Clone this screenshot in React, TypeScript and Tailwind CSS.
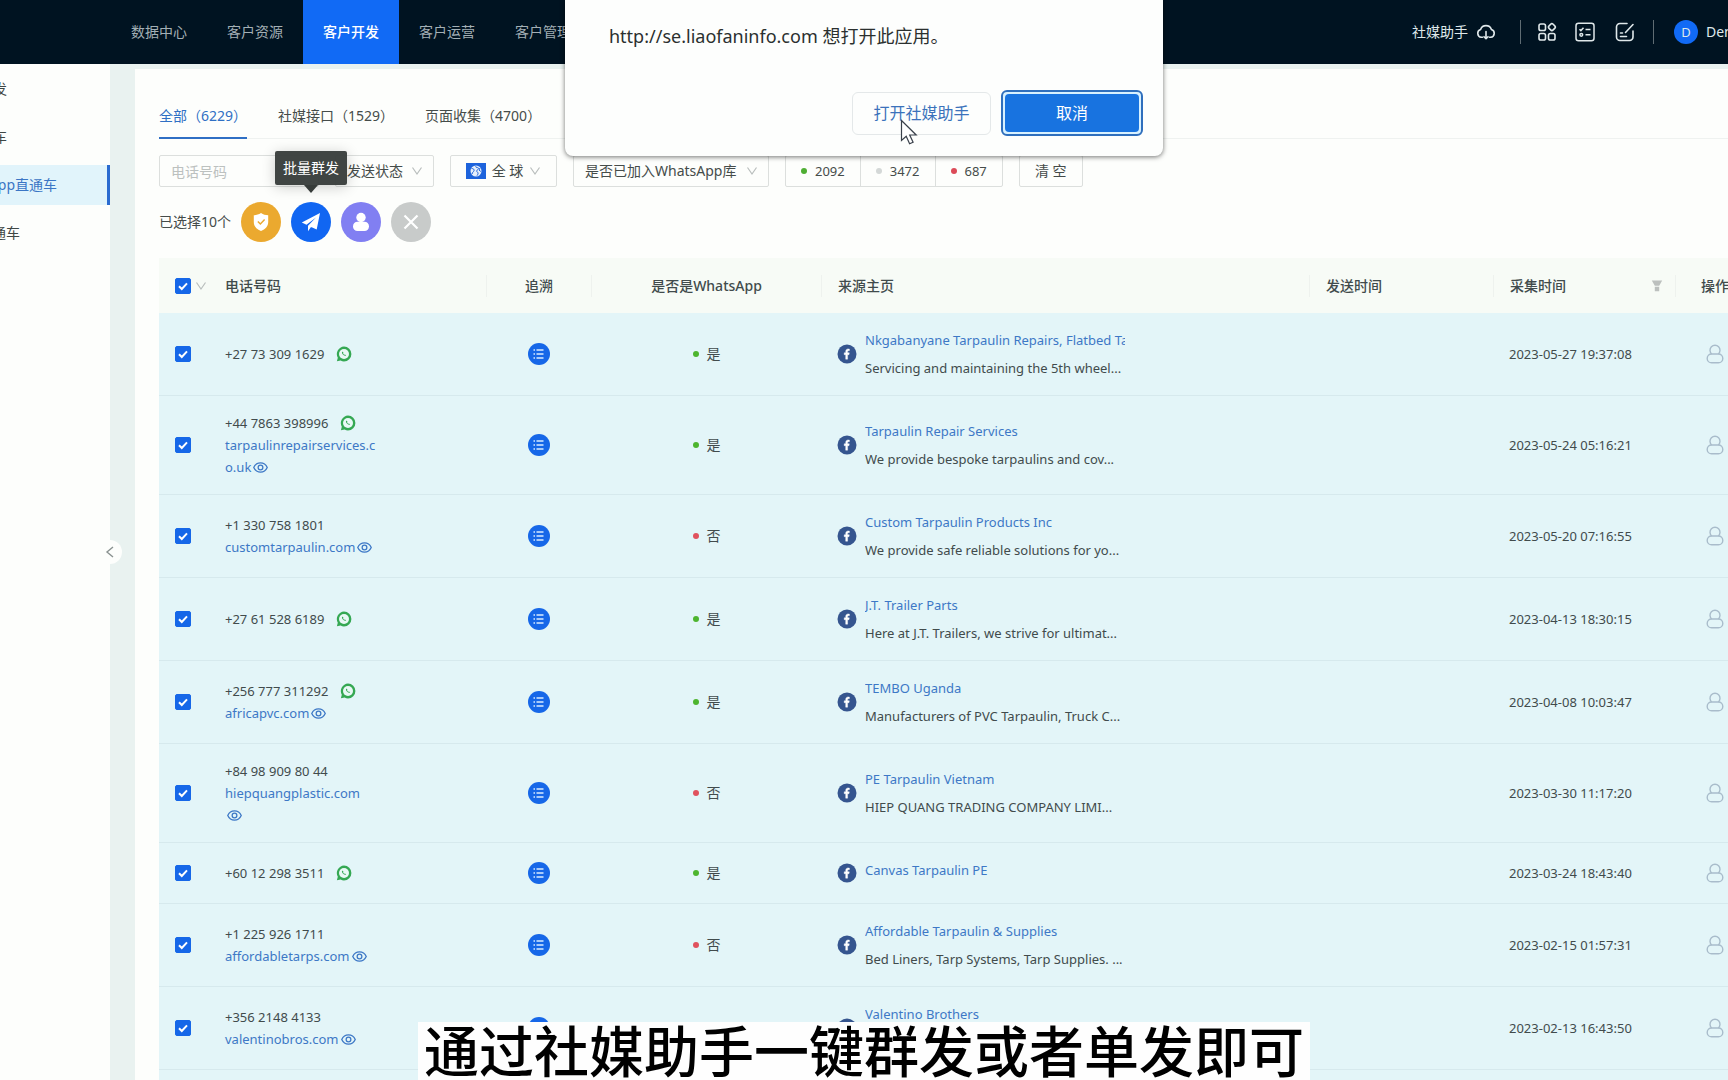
import React from "react";
import clsx from "clsx";

interface Lead {
  phone: string;
  site?: string;
  hasBadge: boolean;
  isWhatsApp: boolean;
  title: string;
  desc?: string;
  collectedAt: string;
}

const leads: Lead[] = [
  {
    phone: "+27 73 309 1629",
    hasBadge: true,
    isWhatsApp: true,
    title: "Nkgabanyane Tarpaulin Repairs, Flatbed Tarps",
    desc: "Servicing and maintaining the 5th wheel...",
    collectedAt: "2023-05-27 19:37:08",
  },
  {
    phone: "+44 7863 398996",
    site: "tarpaulinrepairservices.co.uk",
    hasBadge: true,
    isWhatsApp: true,
    title: "Tarpaulin Repair Services",
    desc: "We provide bespoke tarpaulins and cov...",
    collectedAt: "2023-05-24 05:16:21",
  },
  {
    phone: "+1 330 758 1801",
    site: "customtarpaulin.com",
    hasBadge: false,
    isWhatsApp: false,
    title: "Custom Tarpaulin Products Inc",
    desc: "We provide safe reliable solutions for yo...",
    collectedAt: "2023-05-20 07:16:55",
  },
  {
    phone: "+27 61 528 6189",
    hasBadge: true,
    isWhatsApp: true,
    title: "J.T. Trailer Parts",
    desc: "Here at J.T. Trailers, we strive for ultimat...",
    collectedAt: "2023-04-13 18:30:15",
  },
  {
    phone: "+256 777 311292",
    site: "africapvc.com",
    hasBadge: true,
    isWhatsApp: true,
    title: "TEMBO Uganda",
    desc: "Manufacturers of PVC Tarpaulin, Truck C...",
    collectedAt: "2023-04-08 10:03:47",
  },
  {
    phone: "+84 98 909 80 44",
    site: "hiepquangplastic.com",
    hasBadge: false,
    isWhatsApp: false,
    title: "PE Tarpaulin Vietnam",
    desc: "HIEP QUANG TRADING COMPANY LIMI...",
    collectedAt: "2023-03-30 11:17:20",
  },
  {
    phone: "+60 12 298 3511",
    hasBadge: true,
    isWhatsApp: true,
    title: "Canvas Tarpaulin PE",
    collectedAt: "2023-03-24 18:43:40",
  },
  {
    phone: "+1 225 926 1711",
    site: "affordabletarps.com",
    hasBadge: false,
    isWhatsApp: false,
    title: "Affordable Tarpaulin & Supplies",
    desc: "Bed Liners, Tarp Systems, Tarp Supplies. ...",
    collectedAt: "2023-02-15 01:57:31",
  },
  {
    phone: "+356 2148 4133",
    site: "valentinobros.com",
    hasBadge: false,
    isWhatsApp: false,
    title: "Valentino Brothers",
    collectedAt: "2023-02-13 16:43:50",
    desc: " ",
  },
];

const navItems = ["数据中心", "客户资源", "客户开发", "客户运营", "客户管理"];

const tabs = ["全部（6229）", "社媒接口（1529）", "页面收集（4700）"];

const Chevron: React.FC<{ className?: string }> = ({ className }) => (
  <svg
    viewBox="0 0 12 12"
    className={clsx("h-3 w-3", className)}
    fill="none"
    stroke="#b9bebd"
    strokeWidth="1.2"
  >
    <path d="M1.5 2.5 6 9l4.5-6.5" />
  </svg>
);

const CheckBox: React.FC<{ label: string }> = ({ label }) => (
  <span className="grid h-4 w-4 shrink-0">
    <input
      type="checkbox"
      defaultChecked
      aria-label={label}
      className="col-start-1 row-start-1 h-4 w-4 appearance-none rounded-xs border border-gray-300 bg-white checked:border-[#1667e8] checked:bg-[#1667e8]"
    />
    <svg
      viewBox="0 0 16 16"
      className="pointer-events-none col-start-1 row-start-1"
      fill="none"
      stroke="#fff"
      strokeWidth="2"
    >
      <path d="m4 8.2 2.8 2.8L12 5.4" />
    </svg>
  </span>
);

const WhatsAppIcon = () => (
  <svg viewBox="0 0 16 16" className="h-4 w-4 shrink-0">
    <path
      d="M8 .6a7.4 7.4 0 0 1 0 14.8c-1.2 0-2.4-.2-3.4-.8L.9 15.3l.9-3.6A7.4 7.4 0 0 1 8 .6Z"
      fill="#35a853"
    />
    <circle cx="8" cy="8" r="5" fill="#e9f8f6" />
    <path
      d="M6.3 5.6c-.7.8-.4 2 .8 3.100s2.300 1.500 3.100.7l-1.200-1-.7.4c-.5-.3-1-.7-1.200-1.300l.4-.7Z"
      fill="#35a853"
    />
  </svg>
);

const EyeIcon = () => (
  <svg
    viewBox="0 0 14 14"
    className="ml-0.5 inline-block h-[15px] w-[15px] align-[-3px]"
    fill="none"
    stroke="#3d78c6"
    strokeWidth="1.2"
  >
    <path d="M.7 7C3.3 1.300 10.700 1.300 13.300 7 10.700 12.700 3.300 12.700.7 7Z" />
    <circle cx="7" cy="7" r="2.2" />
  </svg>
);

const TraceIcon = () => (
  <svg viewBox="0 0 22 22" className="h-[22px] w-[22px]">
    <circle cx="11" cy="11" r="11" fill="#1667e8" />
    <g stroke="#d9ecff" strokeWidth="1.4">
      <path d="M8.500 7h7M8.500 11h7M8.500 15h7" />
      <path d="M5.500 7H7M5.500 11H7M5.500 15H7" />
    </g>
  </svg>
);

const FacebookIcon = () => (
  <svg viewBox="0 0 20 20" className="h-5 w-5 shrink-0">
    <circle cx="10" cy="10" r="9.5" fill="#35558f" />
    <path
      d="M8.700 15.200v-4.500H7.200V8.800h1.500V7.500c0-1.700.9-2.600 2.400-2.600.6 0 1 .1 1.300.1v1.700h-.9c-.7 0-.9.4-.9.9v1.200h1.700l-.3 1.900h-1.400v4.500Z"
      fill="#fff"
      stroke="#fff"
      strokeWidth="0.4"
    />
  </svg>
);

const PersonIcon = () => (
  <svg
    viewBox="0 0 18 20"
    className="h-5 w-[18px]"
    fill="none"
    stroke="#a9bccb"
    strokeWidth="1.4"
  >
    <path d="M5.700 10a5 5 0 1 1 6.600 0" />
    <rect x="1.2" y="10" width="15.6" height="8.800" rx="4.4" />
  </svg>
);

const Header = () => (
  <header className="flex h-16 shrink-0 overflow-hidden bg-[#001321] pl-[111px] text-sm leading-[22px] text-[#a3afb5]">
    <nav className="flex">
      {navItems.map((item) => (
        <a
          key={item}
          href="#"
          className={clsx(
            "flex w-24 items-center justify-center",
            item === "客户开发" && "bg-[#116af5] font-medium text-white"
          )}
        >
          {item}
        </a>
      ))}
    </nav>
    <div className="ml-auto flex items-center text-[#dfe8ea]">
      <a href="#" className="flex items-center gap-2">
        社媒助手
        <svg
          viewBox="0 0 20 18"
          className="h-[18px] w-5"
          fill="none"
          stroke="currentColor"
          strokeWidth="1.6"
          strokeLinecap="round"
          strokeLinejoin="round"
        >
          <path d="M6.500 14.300H5.300A4 4 0 0 1 4.600 6.500a5.700 5.700 0 0 1 10.800 0 4 4 0 0 1-.7 7.800h-1.200" />
          <path d="M10 8.500v7M8 13.700l2 2 2-2" />
        </svg>
      </a>
      <span className="ml-6 h-6 w-px bg-[#5f6c73]" />
      <button type="button" aria-label="应用" className="ml-4">
        <svg
          viewBox="0 0 20 20"
          className="h-5 w-5"
          fill="none"
          stroke="currentColor"
          strokeWidth="1.6"
        >
          <rect x="2" y="2" width="6.5" height="6.5" rx="1.8" />
          <rect x="2" y="11.5" width="6.5" height="6.5" rx="1.8" />
          <rect x="11.5" y="11.5" width="6.5" height="6.5" rx="1.8" />
          <rect
            x="12"
            y="2.2"
            width="5.8"
            height="5.8"
            rx="1.8"
            transform="rotate(45 14.9 5.1)"
          />
        </svg>
      </button>
      <button type="button" aria-label="任务" className="ml-[18px]">
        <svg
          viewBox="0 0 20 20"
          className="h-5 w-5"
          fill="none"
          stroke="currentColor"
          strokeWidth="1.5"
        >
          <rect x="1" y="1.2" width="18" height="17.6" rx="2.5" />
          <path d="m4.500 7.200 1.400 1.400 2.600-2.800M10.500 7.400h5M10.500 12.800h5" />
          <circle cx="6.3" cy="12.8" r="1.4" />
        </svg>
      </button>
      <button type="button" aria-label="编辑" className="ml-5">
        <svg
          viewBox="0 0 20 20"
          className="h-5 w-5"
          fill="none"
          stroke="currentColor"
          strokeWidth="1.6"
          strokeLinecap="round"
        >
          <path d="M12 1.500H5A3.500 3.500 0 0 0 1.500 5v10A3.500 3.500 0 0 0 5 18.500h9.500A3.500 3.500 0 0 0 18 15V9" />
          <path d="m18 2.500-7.500 8M5.500 11h2M5.500 14.500h6" />
        </svg>
      </button>
      <span className="ml-[18px] h-6 w-px bg-[#5f6c73]" />
      <span className="ml-5 flex h-6 w-6 items-center justify-center rounded-full bg-[#116af5] text-[13px]">
        D
      </span>
      <span className="ml-2 w-[22px] overflow-hidden">Dem</span>
    </div>
  </header>
);

const Sidebar = () => (
  <aside className="relative w-[110px] shrink-0 bg-[#fdfefc] pt-[5px] text-sm leading-[22px] whitespace-nowrap text-[#3f4745]">
    <nav className="flex flex-col gap-2">
      <a href="#" className="flex h-10 items-center justify-end pr-[103px]">
        发
      </a>
      <a href="#" className="flex h-10 items-center justify-end pr-[103px]">
        车
      </a>
      <a
        href="#"
        className="flex h-10 items-center justify-end border-r-3 border-[#2a6bd0] bg-[#e1f4fb] pr-[50px] text-[#3b76c5]"
      >
        pp直通车
      </a>
      <a href="#" className="flex h-10 items-center justify-end pr-[90px]">
        通车
      </a>
    </nav>
    <button
      type="button"
      aria-label="收起"
      className="absolute top-[476px] -right-3 flex h-6 w-6 items-center justify-center rounded-full bg-[#fdfefc]"
    >
      <svg
        viewBox="0 0 12 12"
        className="h-3 w-3"
        fill="none"
        stroke="#8a9290"
        strokeWidth="1.4"
      >
        <path d="M9 1 3 6l6 5" />
      </svg>
    </button>
  </aside>
);

const Filters = () => (
  <div className="mt-4 flex gap-4 text-sm leading-[22px] text-[#454c4a]">
    <input
      type="text"
      aria-label="电话号码"
      placeholder="电话号码"
      className="h-8 w-40 rounded-xs border border-[#dcdfdd] px-[11px] placeholder:text-[#bcc1bf]"
    />
    <label className="grid h-8 w-[99px] items-center rounded-xs border border-[#dcdfdd]">
      <select
        aria-label="发送状态"
        className="col-start-1 row-start-1 h-full w-full appearance-none pl-[11px]"
      >
        <option>发送状态</option>
      </select>
      <Chevron className="pointer-events-none col-start-1 row-start-1 mr-[10px] justify-self-end" />
    </label>
    <button
      type="button"
      className="flex h-8 w-[107px] items-center justify-center gap-[6px] rounded-xs border border-[#dcdfdd]"
    >
      <svg viewBox="0 0 20 16" className="h-4 w-5">
        <rect width="20" height="16" fill="#1d63dc" />
        <circle cx="10" cy="8" r="5.5" fill="#e6effb" />
        <path
          d="M5.500 5.500c2 0 3 1 2.500 2.300S6 9.300 6.200 11M10 3c-.6 1 .3 1.800 1.500 1.600s1.300 1.400.2 2-1.400 1.800-.2 2.600.3 2.300-.5 3.500M14 5l-1 2 1.800 1.500"
          fill="none"
          stroke="#1d63dc"
        />
      </svg>
      <span>全 球</span>
      <Chevron />
    </button>
    <label className="grid h-8 w-[196px] items-center rounded-xs border border-[#dcdfdd]">
      <select
        aria-label="是否已加入WhatsApp库"
        className="col-start-1 row-start-1 h-full w-full appearance-none pl-[11px]"
      >
        <option>是否已加入WhatsApp库</option>
      </select>
      <Chevron className="pointer-events-none col-start-1 row-start-1 mr-[10px] justify-self-end" />
    </label>
    <div className="flex h-8 divide-x divide-[#dcdfdd] rounded-xs border border-[#dcdfdd] text-[13px]">
      <button type="button" className="flex items-center gap-2 px-[15px]">
        <span className="h-1.5 w-1.5 rounded-full bg-[#4fae33]" />
        2092
      </button>
      <button type="button" className="flex items-center gap-2 px-[15px]">
        <span className="h-1.5 w-1.5 rounded-full bg-[#d4d8d7]" />
        3472
      </button>
      <button type="button" className="flex items-center gap-2 px-[15px]">
        <span className="h-1.5 w-1.5 rounded-full bg-[#dc4b58]" />
        687
      </button>
    </div>
    <button
      type="button"
      className="h-8 w-16 rounded-xs border border-[#dcdfdd]"
    >
      清 空
    </button>
  </div>
);

const BulkActions = () => (
  <div className="mt-[15px] flex items-center gap-[10px] text-sm text-[#454c4a]">
    <span>已选择10个</span>
    <button
      type="button"
      aria-label="验证"
      className="flex h-10 w-10 items-center justify-center rounded-full bg-[#eba92f]"
    >
      <svg viewBox="0 0 20 22" className="h-5 w-[18px]">
        <path
          d="M10 1c2.500 1.600 5 2.400 8 2.600V11c0 4.800-3.200 8-8 10-4.800-2-8-5.200-8-10V3.600C5 3.400 7.500 2.600 10 1Z"
          fill="#fff"
        />
        <path
          d="m6.500 10.500 2.800 2.800 4.700-5"
          fill="none"
          stroke="#eba92f"
          strokeWidth="1.6"
        />
      </svg>
    </button>
    <div className="relative">
      <button
        type="button"
        aria-label="批量群发"
        className="flex h-10 w-10 items-center justify-center rounded-full bg-[#1166f2]"
      >
        <svg viewBox="0 0 20 20" className="h-5 w-5" fill="#fff">
          <path d="M19 1 .8 10.500l4.700 2.200L15 5.500 7 13.800v5.500l2.800-4 .9-.1 5 2.300Z" />
        </svg>
      </button>
      <div
        role="tooltip"
        className="absolute bottom-[57px] left-1/2 -translate-x-1/2 rounded-xs bg-[#363b39]/95 px-2 py-[5px] leading-6 whitespace-nowrap text-white shadow-[0_2px_14px_rgba(0,0,0,0.2)]"
      >
        批量群发
        <svg
          viewBox="0 0 14 8"
          className="absolute top-full left-1/2 h-2 w-3.5 -translate-x-1/2"
        >
          <path d="M0 0h14L7 8Z" fill="#363b39" />
        </svg>
      </div>
    </div>
    <button
      type="button"
      aria-label="分配"
      className="flex h-10 w-10 items-center justify-center rounded-full bg-[#817ff2]"
    >
      <svg viewBox="0 0 20 20" className="h-5 w-5" fill="#fff">
        <circle cx="10" cy="5.5" r="4.7" />
        <rect x="2" y="9.8" width="16" height="9.2" rx="4.5" />
      </svg>
    </button>
    <button
      type="button"
      aria-label="取消选择"
      className="flex h-10 w-10 items-center justify-center rounded-full bg-[#c8cbca]"
    >
      <svg
        viewBox="0 0 16 16"
        className="h-4 w-4"
        stroke="#fff"
        strokeWidth="2.2"
      >
        <path d="m1.500 1.500 13 13M14.500 1.500l-13 13" />
      </svg>
    </button>
  </div>
);

const LeadRow: React.FC<{ lead: Lead }> = ({ lead }) => (
  <tr className="border-b border-[#d6e9ed] bg-[#e3f5f8]">
    <td className="py-4 pl-4">
      <CheckBox label={lead.phone} />
    </td>
    <td className="px-4 py-4">
      <div className="flex items-center gap-3">
        {lead.phone}
        {lead.hasBadge && <WhatsAppIcon />}
      </div>
      {lead.site && (
        <a href="#" className="block w-[151px] break-all text-[#3d78c6]">
          {lead.site}
          <EyeIcon />
        </a>
      )}
    </td>
    <td className="py-4">
      <button type="button" aria-label="追溯" className="mx-auto block">
        <TraceIcon />
      </button>
    </td>
    <td className="py-4">
      <div className="flex items-center justify-center gap-2 text-sm leading-[22px]">
        <span
          className={clsx(
            "h-1.5 w-1.5 rounded-full",
            lead.isWhatsApp ? "bg-[#4db52f]" : "bg-[#e0525e]"
          )}
        />
        {lead.isWhatsApp ? "是" : "否"}
      </div>
    </td>
    <td className="px-4 py-4">
      <div className="flex items-center gap-2">
        <FacebookIcon />
        <div className="w-[260px] overflow-hidden whitespace-pre">
          <a href="#" className="mb-1.5 block text-[#3d78c6]">
            {lead.title}
          </a>
          {lead.desc && <p>{lead.desc}</p>}
        </div>
      </div>
    </td>
    <td />
    <td className="px-4 py-4">{lead.collectedAt}</td>
    <td className="py-4 pl-[30px]">
      <button type="button" aria-label="分配" className="block">
        <PersonIcon />
      </button>
    </td>
  </tr>
);

const LeadTable = () => (
  <table className="mt-4 w-full table-fixed text-left text-[13px] leading-[22px] text-[#414b4c]">
    <colgroup>
      <col className="w-[50px]" />
      <col className="w-[277px]" />
      <col className="w-[106px]" />
      <col className="w-[229px]" />
      <col />
      <col className="w-[183px]" />
      <col className="w-[183px]" />
      <col className="w-[52px]" />
    </colgroup>
    <thead>
      <tr className="h-[55px] bg-[#f7fbf6] text-sm leading-[22px]">
        <th className="pl-4">
          <div className="flex items-center gap-1">
            <CheckBox label="全选" />
            <Chevron className="shrink-0" />
          </div>
        </th>
        <th className="px-4 font-medium">电话号码</th>
        <th className="text-center font-medium">
          <div className="border-x border-[#eef2ee]">追溯</div>
        </th>
        <th className="text-center font-medium">是否是WhatsApp</th>
        <th className="font-medium">
          <div className="border-x border-[#eef2ee] px-4">来源主页</div>
        </th>
        <th className="px-4 font-medium">发送时间</th>
        <th className="font-medium">
          <div className="flex items-center justify-between border-x border-[#eef2ee] pr-3 pl-4">
            采集时间
            <svg viewBox="0 0 12 12" className="h-3 w-3" fill="#bcc0be">
              <path d="M.8.500h10.400L8.200 5.800H3.800ZM3.800 6.800h4.400v4.400H3.800Z" />
            </svg>
          </div>
        </th>
        <th className="overflow-hidden pl-[25px] font-medium whitespace-nowrap">
          操作
        </th>
      </tr>
    </thead>
    <tbody>
      {leads.map((lead) => (
        <LeadRow key={lead.phone} lead={lead} />
      ))}
      <tr className="h-[83px] bg-[#e3f5f8]">
        <td colSpan={8} />
      </tr>
    </tbody>
  </table>
);

const OpenAppDialog = () => (
  <div
    role="dialog"
    aria-label="打开应用"
    className="absolute top-0 left-1/2 w-[598px] -translate-x-1/2 rounded-b-lg bg-[#fdfefd] px-5 pb-5 shadow-[0_1px_5px_rgba(0,0,0,0.55)]"
  >
    <p className="px-6 pt-5 text-lg leading-8 text-[#2b302f]">
      http://se.liaofaninfo.com 想打开此应用。
    </p>
    <div className="mt-[38px] flex items-center justify-end gap-[10px] text-base">
      <button
        type="button"
        className="h-[43px] w-[139px] rounded-md border border-[#e4e8e9] text-[#3b72bb]"
      >
        打开社媒助手
      </button>
      <span className="rounded-md border-2 border-[#2f6fbd] bg-[#d8f1ff] p-0.5">
        <button
          type="button"
          className="block h-[38px] w-[134px] rounded-sm bg-[#1873e0] text-white"
        >
          取消
        </button>
      </span>
    </div>
    <svg
      viewBox="0 0 18 26"
      className="absolute top-[119px] left-[335px] h-[26px] w-[18px]"
      fill="#fff"
      stroke="#39404a"
      strokeWidth="1.2"
    >
      <path d="M1.500 1.500v20l4.700-4.300 3.400 7.600 3.500-1.600-3.400-7.200h6.500Z" />
    </svg>
  </div>
);

const App = () => (
  <div className="relative flex h-screen flex-col overflow-hidden bg-[#e9f2f0] font-['Noto_Sans','Noto_Sans_CJK_SC',sans-serif]">
    <Header />
    <div className="flex min-h-0 flex-1">
      <Sidebar />
      <main className="mt-[5px] ml-[25px] min-w-0 flex-1 bg-[#fdfefc] pt-8 pl-6">
        <div className="flex gap-[31px] border-b border-[#eff2f0] text-sm leading-[22px] text-[#454c4a]">
          {tabs.map((tab, index) => (
            <button
              key={tab}
              type="button"
              className={clsx(
                "-mb-px border-b-2 pt-1 pb-[10px]",
                index === 0
                  ? "border-[#2f6fc4] text-[#2f6fc4]"
                  : "border-transparent"
              )}
            >
              {tab}
            </button>
          ))}
        </div>
        <Filters />
        <BulkActions />
        <LeadTable />
      </main>
    </div>
    <OpenAppDialog />
    <p className="absolute bottom-0 left-1/2 -translate-x-1/2 bg-[#fefefe] px-1.5 text-[55px] leading-[58px] font-medium whitespace-nowrap text-black">
      通过社媒助手一键群发或者单发即可
    </p>
  </div>
);

export default App;
